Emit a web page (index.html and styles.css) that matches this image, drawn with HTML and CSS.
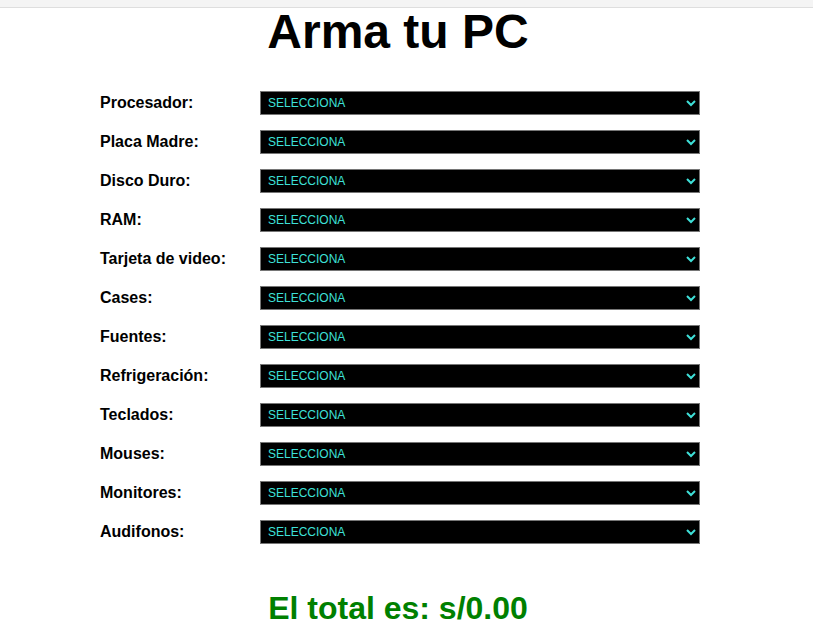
FILE: index.html
```html
<!DOCTYPE html>
<html lang="es">
<head>
<meta charset="utf-8">
<title>Arma tu PC</title>
<link rel="stylesheet" href="styles.css">
</head>
<body>
<div class="topbar"></div>
<div class="page">
  <h1 class="title">Arma tu PC</h1>
  <form class="builder">
    <label class="field-label" for="cpu">Procesador:</label>
    <select class="field-select" id="cpu"><option>SELECCIONA</option></select>
    <label class="field-label" for="mb">Placa Madre:</label>
    <select class="field-select" id="mb"><option>SELECCIONA</option></select>
    <label class="field-label" for="hdd">Disco Duro:</label>
    <select class="field-select" id="hdd"><option>SELECCIONA</option></select>
    <label class="field-label" for="ram">RAM:</label>
    <select class="field-select" id="ram"><option>SELECCIONA</option></select>
    <label class="field-label" for="gpu">Tarjeta de video:</label>
    <select class="field-select" id="gpu"><option>SELECCIONA</option></select>
    <label class="field-label" for="case">Cases:</label>
    <select class="field-select" id="case"><option>SELECCIONA</option></select>
    <label class="field-label" for="psu">Fuentes:</label>
    <select class="field-select" id="psu"><option>SELECCIONA</option></select>
    <label class="field-label" for="cool">Refrigeración:</label>
    <select class="field-select" id="cool"><option>SELECCIONA</option></select>
    <label class="field-label" for="kb">Teclados:</label>
    <select class="field-select" id="kb"><option>SELECCIONA</option></select>
    <label class="field-label" for="mouse">Mouses:</label>
    <select class="field-select" id="mouse"><option>SELECCIONA</option></select>
    <label class="field-label" for="mon">Monitores:</label>
    <select class="field-select" id="mon"><option>SELECCIONA</option></select>
    <label class="field-label" for="aud">Audifonos:</label>
    <select class="field-select" id="aud"><option>SELECCIONA</option></select>
  </form>
  <h2 class="total">El total es: s/0.00</h2>
</div>
</body>
</html>
```

FILE: styles.css
```css
html, body {
  margin: 0;
  padding: 0;
  background: #ffffff;
}

body {
  font-family: "Liberation Sans", Arial, sans-serif;
  color: #000;
}

.topbar {
  height: 7px;
  background: #f4f4f4;
  border-bottom: 1px solid #dedede;
}

.page {
  width: 800px;
}

.title {
  margin: 0;
  padding-right: 4px;
  font-size: 48px;
  line-height: 48px;
  font-weight: bold;
  text-align: center;
}

.builder {
  display: grid;
  grid-template-columns: 160px 440px;
  row-gap: 15px;
  align-items: center;
  width: 600px;
  margin: 35px auto 0;
}

.field-label {
  font-size: 16px;
  font-weight: bold;
}

.field-select {
  width: 440px;
  height: 24px;
  margin: 0;
  padding: 0 3px;
  font-family: "Liberation Sans", Arial, sans-serif;
  font-size: 12px;
  color: #3ee0d8;
  background: #000;
  border: 1px solid #767676;
  border-radius: 0;
}

.total {
  margin: 46px 0 0;
  padding-right: 4px;
  font-size: 32px;
  line-height: 37px;
  font-weight: bold;
  color: #008000;
  text-align: center;
}
```
